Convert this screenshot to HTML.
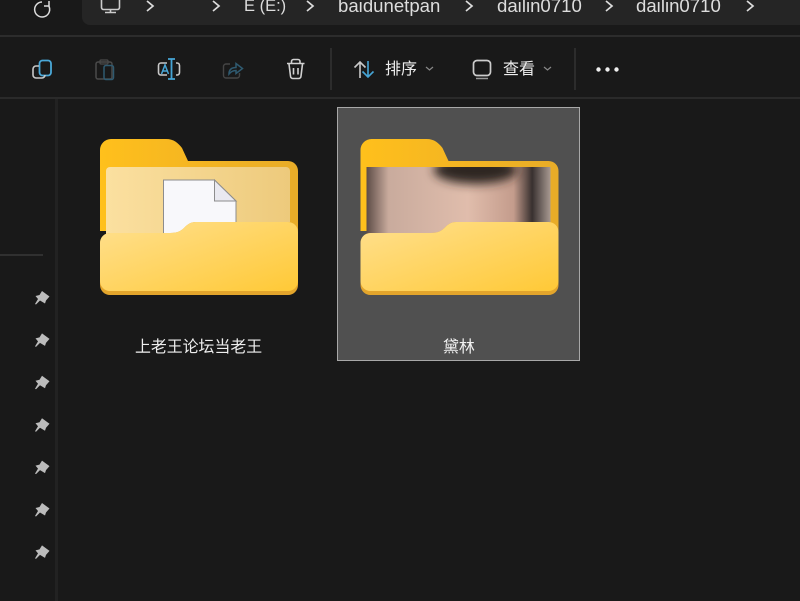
<!DOCTYPE html>
<html>
<head>
<meta charset="utf-8">
<style>
html,body{margin:0;padding:0;background:#191919;}
#p{position:relative;width:800px;height:601px;overflow:hidden;background:#191919;font-family:"Liberation Sans","Noto Sans CJK SC",sans-serif;color:#e8e8e8;}
.a{position:absolute;}
.t{position:absolute;white-space:nowrap;line-height:20px;}
svg{position:absolute;left:0;top:0;}
</style>
</head>
<body>
<div id="p">
<div class="a" style="left:82px;top:-10px;width:730px;height:35px;background:#252525;border-radius:8px;"></div>
<div class="a" style="left:0;top:35px;width:800px;height:2px;background:#2c2c2c;"></div>
<div class="a" style="left:0;top:97px;width:800px;height:2px;background:#2a2a2a;"></div>
<div class="a" style="left:55px;top:99px;width:3px;height:502px;background:#222;"></div>
<div class="a" style="left:0;top:254px;width:43px;height:2px;background:#303030;"></div>
<div class="a" style="left:330px;top:48px;width:2px;height:42px;background:#2c2c2c;"></div>
<div class="a" style="left:574px;top:48px;width:2px;height:42px;background:#2c2c2c;"></div>

<div class="t" style="left:244px;top:-4px;font-size:16.5px;color:#ddd;">E (E:)</div>
<div class="t" style="left:338px;top:-4px;font-size:18.6px;color:#ddd;">baidunetpan</div>
<div class="t" style="left:497px;top:-4px;font-size:18.6px;color:#ddd;">dailin0710</div>
<div class="t" style="left:636px;top:-4px;font-size:18.6px;color:#ddd;">dailin0710</div>
<div class="t" style="left:385px;top:60px;font-size:16px;color:#eee;">排序</div>
<div class="t" style="left:503px;top:60px;font-size:16px;color:#eee;">查看</div>
<div class="t" style="left:135px;top:338px;font-size:15.9px;color:#eee;">上老王论坛当老王</div>

<svg width="800" height="601" viewBox="0 0 800 601" fill="none">
<defs>
<linearGradient id="b" x1="0" y1="0" x2="1" y2="0"><stop offset="0" stop-color="#ffc01c"/><stop offset=".5" stop-color="#f4b522"/><stop offset="1" stop-color="#e8ac28"/></linearGradient>
<linearGradient id="f" x1="0" y1="0" x2="1" y2="1"><stop offset="0" stop-color="#ffe08f"/><stop offset="1" stop-color="#ffc936"/></linearGradient>
<linearGradient id="i" x1="0" y1="0" x2="1" y2="0"><stop offset="0" stop-color="#fbe0a0"/><stop offset="1" stop-color="#edca7c"/></linearGradient>
<linearGradient id="th" x1="0" y1="0" x2="1" y2="0"><stop offset="0" stop-color="#5d4c47"/><stop offset=".12" stop-color="#c9ab9d"/><stop offset=".55" stop-color="#e0bdac"/><stop offset=".8" stop-color="#c49c8c"/><stop offset=".9" stop-color="#38302f"/><stop offset="1" stop-color="#a89a92"/></linearGradient>
<filter id="bl" x="-20%" y="-50%" width="140%" height="200%"><feGaussianBlur stdDeviation="5"/></filter>
<clipPath id="cl"><rect x="106" y="167" width="184" height="72"/></clipPath>
</defs>

<!-- top bar icons -->
<path d="M48.500 5.500A7.500 7.500 0 1 1 42 2M49 1V6H44" stroke="#ddd" stroke-width="1.500"/>
<rect x="101.500" y="-5" width="18" height="14.500" rx="2" stroke="#ccc" stroke-width="1.600"/>
<path d="M105 12.500H116M110.500 10V12" stroke="#ccc" stroke-width="1.600"/>
<g stroke="#ddd" stroke-width="1.700"><path d="M147 1L153 6L147 11"/><path d="M213 1L219 6L213 11"/><path d="M307 1L313 6L307 11"/><path d="M466 1L472 6L466 11"/><path d="M606 1L612 6L606 11"/><path d="M747 1L753 6L747 11"/></g>

<!-- toolbar icons -->
<rect x="39.500" y="60.500" width="11.500" height="15" rx="3" stroke="#4aa8d8" stroke-width="1.800"/>
<path d="M39 66H36a3 3 0 0 0-3 3v6a3 3 0 0 0 3 3h6a3 3 0 0 0 3-3" stroke="#c8c8c8" stroke-width="1.600"/>
<rect x="96" y="62" width="16" height="17" rx="2" stroke="#4a4a4a" stroke-width="1.500"/>
<rect x="100" y="60" width="8" height="4" rx="1" stroke="#4a4a4a" stroke-width="1.200"/>
<rect x="104" y="65.500" width="9.500" height="14" rx="2" stroke="#2f5a70" stroke-width="1.500"/>
<path d="M167 63H161a2.500 2.500 0 0 0-2.500 2.500v7a2.500 2.500 0 0 0 2.500 2.500H167M176 63H177a2.500 2.500 0 0 1 2.500 2.500v7a2.500 2.500 0 0 1-2.500 2.500H176" stroke="#c8c8c8" stroke-width="1.600"/>
<path d="M168 59H175M171.500 59V79M168 79H175" stroke="#46a5d6" stroke-width="1.800"/>
<path d="M161.500 74L165 65L168.500 74M162.800 71H167.200" stroke="#46a5d6" stroke-width="1.500"/>
<path d="M230 64H226a2.500 2.500 0 0 0-2.500 2.500v9a2.500 2.500 0 0 0 2.500 2.500h11a2.500 2.500 0 0 0 2.500-2.500V73" stroke="#454545" stroke-width="1.400"/>
<path d="M229 74C229 69 232 67.500 236 67.500V63.500L242.500 68.500L236 73.500V70.500C233 70.500 231 71.500 229 74Z" stroke="#2f5a70" stroke-width="1.500"/>
<path d="M287 63.500H304.500M291.500 63.500V61.500a2 2 0 0 1 2-2h4.500a2 2 0 0 1 2 2v2M289 64L290.500 76a2.500 2.500 0 0 0 2.500 2.500h5.500a2.500 2.500 0 0 0 2.500-2.500L302.500 64M293.500 68V74.500M298 68V74.500" stroke="#d0d0d0" stroke-width="1.600"/>
<path d="M360 78V62M354.500 67.500L360 62L365.500 67.500" stroke="#c8c8c8" stroke-width="1.600"/>
<path d="M368 61V77M362.500 71.500L368 77L373.500 71.500" stroke="#46a5d6" stroke-width="1.600"/>
<path d="M426 67L429.500 70L433 67" stroke="#888" stroke-width="1.200"/>
<rect x="473.500" y="60.500" width="17" height="15" rx="3.500" stroke="#ccc" stroke-width="1.700"/>
<path d="M476 78.500H488" stroke="#999" stroke-width="1.500"/>
<path d="M544 67L547.500 70L551 67" stroke="#888" stroke-width="1.200"/>
<circle cx="598.500" cy="69.500" r="2.200" fill="#eee"/><circle cx="607.500" cy="69.500" r="2.200" fill="#eee"/><circle cx="616.500" cy="69.500" r="2.200" fill="#eee"/>

<!-- pins -->
<g fill="#bcbcbc">
<path id="pn" d="M42 291L49.500 296.500L46 300.500L45 303.500L40 300.500L36 304.500L35 304L38 299L35.500 296L39.500 295Z"/>
<use href="#pn" y="42.400"/><use href="#pn" y="84.800"/><use href="#pn" y="127.200"/><use href="#pn" y="169.600"/><use href="#pn" y="212"/><use href="#pn" y="254.400"/>
</g>

<!-- selection -->
<rect x="337.500" y="107.500" width="242" height="253" fill="#505050" stroke="#a8a8a8"/>

<!-- folder 1 -->
<path d="M100 150a11 11 0 0 1 11-11h55c8 0 12 4 16 9l6 13h100a10 10 0 0 1 10 10v60H100Z" fill="url(#b)"/>
<rect x="106" y="167" width="184" height="73" rx="4" fill="url(#i)"/>
<path d="M163.500 180H214.500L236 201V240H163.500Z" fill="#f8f8fb" stroke="#8d8d8d" stroke-width="1"/>
<path d="M214.500 180V201H236Z" fill="#e9e9f0" stroke="#8d8d8d" stroke-width="1"/>
<path d="M100 243a10 10 0 0 1 10-10h60c8 0 11-2 15-6 3-3 6-5 11-5h92a10 10 0 0 1 10 10v53a10 10 0 0 1-10 10H110a10 10 0 0 1-10-10Z" fill="#e3a52c"/>
<path d="M100 243a10 10 0 0 1 10-10h60c8 0 11-2 15-6 3-3 6-5 11-5h92a10 10 0 0 1 10 10v49a10 10 0 0 1-10 10H110a10 10 0 0 1-10-10Z" fill="url(#f)"/>

<!-- folder 2 -->
<g transform="translate(260.500,0)">
<path d="M100 150a11 11 0 0 1 11-11h55c8 0 12 4 16 9l6 13h100a10 10 0 0 1 10 10v60H100Z" fill="url(#b)"/>
<rect x="106" y="167" width="184" height="73" fill="url(#th)"/>
<g clip-path="url(#cl)"><ellipse cx="215" cy="170" rx="42" ry="14" fill="#2d2624" filter="url(#bl)"/></g>
<path d="M100 243a10 10 0 0 1 10-10h60c8 0 11-2 15-6 3-3 6-5 11-5h92a10 10 0 0 1 10 10v53a10 10 0 0 1-10 10H110a10 10 0 0 1-10-10Z" fill="#e3a52c"/>
<path d="M100 243a10 10 0 0 1 10-10h60c8 0 11-2 15-6 3-3 6-5 11-5h92a10 10 0 0 1 10 10v49a10 10 0 0 1-10 10H110a10 10 0 0 1-10-10Z" fill="url(#f)"/>
</g>
</svg>
<div class="t" style="left:443px;top:338px;font-size:15.9px;color:#f2f2f2;">黛林</div>
</div>
</body>
</html>
